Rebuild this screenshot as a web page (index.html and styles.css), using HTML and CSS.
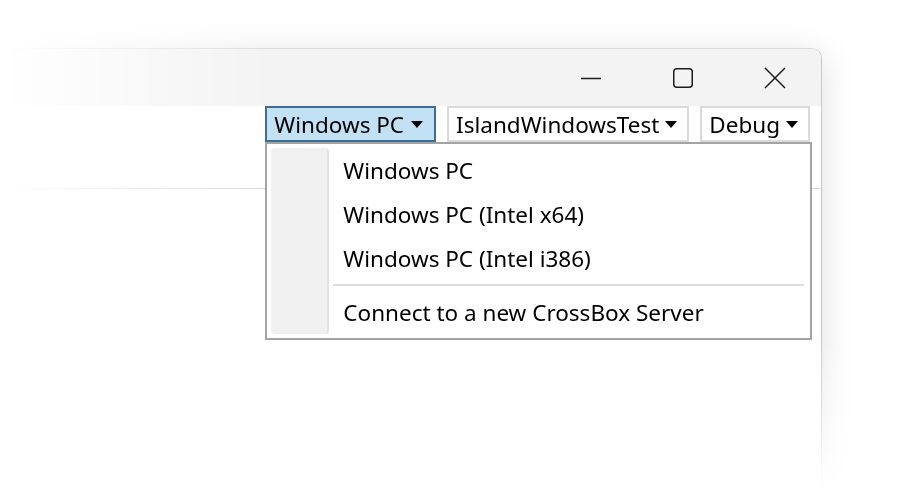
FILE: index.html
```html
<!DOCTYPE html>
<html lang="en">
<head>
    <meta charset="UTF-8">
    <title>IslandWindowsTest</title>
    <link rel="stylesheet" href="styles.css">
</head>
<body>
    <div class = "desk_fade">
        <div class = "desk_inner">
            <div class = "window_main">
                <div class = "bar_title">
                    <div class = "btn_caption">
                        <svg width="22" height="22" viewBox="0 0 22 22"><path d="M1 11.5h20" /></svg>
                    </div>
                    <div class = "btn_caption">
                        <svg width="22" height="22" viewBox="0 0 22 22"><rect x="1.75" y="1.75" width="18.5" height="18.5" rx="3" /></svg>
                    </div>
                    <div class = "btn_caption">
                        <svg width="22" height="22" viewBox="0 0 22 22"><path d="M1 1l20 20M21 1L1 21" /></svg>
                    </div>
                </div>

                <div class = "bar_tools">
                    <div class = "box_combo">
                        <div class = "btn_combo btn_open">Windows PC<span class = "arrow_down"></span></div>

                        <div class = "menu_drop">
                            <div class = "gutter_menu"></div>
                            <div class = "list_menu">
                                <div class = "item_menu">Windows PC</div>
                                <div class = "item_menu">Windows PC (Intel x64)</div>
                                <div class = "item_menu">Windows PC (Intel i386)</div>
                                <div class = "sep_menu"></div>
                                <div class = "item_menu">Connect to a new CrossBox Server</div>
                            </div>
                        </div>
                    </div>
                    <div class = "btn_combo">IslandWindowsTest<span class = "arrow_down"></span></div>
                    <div class = "btn_combo">Debug<span class = "arrow_down"></span></div>
                </div>
            </div>
        </div>
    </div>
</body>
</html>
```

FILE: styles.css
```css
body 
{
    margin: 0;
    padding: 0;
    background-color: #fff;
    font-family: 'Noto Sans', 'Open Sans', sans-serif;
    color: #000;
}

/* two nested masks: fade out to the left, then to the bottom */
.desk_fade 
{
    width: 901px;
    height: 492px;
    overflow: hidden;
    -webkit-mask-image: linear-gradient(to right, transparent 0, #000 270px);
    mask-image: linear-gradient(to right, transparent 0, #000 270px);
}

.desk_inner 
{
    height: 100%;
    padding-top: 48px;
    box-sizing: border-box;
    background-color: #fff;
    -webkit-mask-image: linear-gradient(to bottom, #000 340px, transparent 492px);
    mask-image: linear-gradient(to bottom, #000 340px, transparent 492px);
}

.window_main 
{
    width: 822px;
    height: 480px;
    box-sizing: border-box;
    background-color: #fff;
    border-top: 1px solid #dcdcdc;
    border-right: 1px solid #c9c9c9;
    border-top-right-radius: 10px;
    box-shadow: 0 6px 34px rgba(0,0,0,0.13);
}

.bar_title 
{
    height: 57px;
    display: flex;
    justify-content: flex-end;
    background-color: #f3f3f3;
    border-top-right-radius: 9px;
}

.btn_caption 
{
    width: 92px;
    display: flex;
    align-items: center;
    justify-content: center;
}

.btn_caption svg 
{
    fill: none;
    stroke: #1c1c1c;
    stroke-width: 1.5;
}

.bar_tools 
{
    height: 82px;
    display: flex;
    justify-content: flex-end;
    align-items: flex-start;
    gap: 11px;
    padding-right: 11px;
    border-bottom: 1px solid #dadada;
}

.box_combo 
{
    position: relative;
}

.btn_combo 
{
    height: 36px;
    box-sizing: border-box;
    display: flex;
    align-items: center;
    gap: 6px;
    padding: 0 10px 0 7px;
    border: 2px solid #dadada;
    background-color: #fff;
    font-size: 22.5px;
    white-space: nowrap;
}

.btn_open 
{
    gap: 7px;
    padding: 0 11px 0 7px;
    border-color: #3c6d96;
    background-color: #c3e1f4;
}

.arrow_down 
{
    width: 0;
    height: 0;
    margin-top: 1px;
    border-left: 6.5px solid transparent;
    border-right: 6.5px solid transparent;
    border-top: 7px solid #000;
}

.menu_drop 
{
    position: absolute;
    top: 100%;
    left: 0;
    width: 547px;
    box-sizing: border-box;
    display: flex;
    padding: 4px;
    border: 2px solid #a4a4a4;
    background-color: #fff;
}

.gutter_menu 
{
    width: 56px;
    background-color: #f0f0f0;
    border-radius: 4px;
    border-right: 2px solid #e2e2e2;
}

.list_menu 
{
    flex: 1;
}

.item_menu 
{
    height: 44px;
    display: flex;
    align-items: center;
    padding-left: 14px;
    font-size: 22.5px;
    white-space: nowrap;
}

.sep_menu 
{
    height: 2px;
    margin: 4px 2px 4px 4px;
    background-color: #dedede;
}
```
